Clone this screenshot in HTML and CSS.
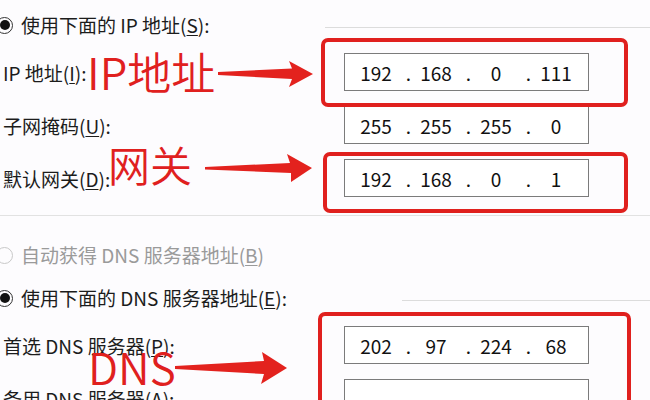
FILE: index.html
```html
<!DOCTYPE html>
<html lang="zh-CN">
<head>
    <meta charset="UTF-8">
    <title>Internet 协议版本 4 (TCP/IPv4) 属性</title>
    <link rel="stylesheet" href="styles.css">
</head>
<body>
<div class="page">
    <!-- IP address block -->
    <section class="group">
        <div class="choice">
            <span class="radio on"></span>
            <span>使用下面的 IP 地址(<u>S</u>):</span>
            <span class="rule"></span>
        </div>
        <div class="fields">
            <div class="field">
                <label>IP 地址(<u>I</u>):</label>
                <div class="ipbox"><span>192</span><i>.</i><span>168</span><i>.</i><span>0</span><i>.</i><span>111</span></div>
            </div>
            <div class="field">
                <label>子网掩码(<u>U</u>):</label>
                <div class="ipbox"><span>255</span><i>.</i><span>255</span><i>.</i><span>255</span><i>.</i><span>0</span></div>
            </div>
            <div class="field">
                <label>默认网关(<u>D</u>):</label>
                <div class="ipbox"><span>192</span><i>.</i><span>168</span><i>.</i><span>0</span><i>.</i><span>1</span></div>
            </div>
        </div>
    </section>

    <hr class="divider">

    <!-- DNS block -->
    <section class="group dns">
        <div class="choice disabled">
            <span class="radio off"></span>
            <span>自动获得 DNS 服务器地址(<u>B</u>)</span>
        </div>
        <div class="choice">
            <span class="radio on"></span>
            <span>使用下面的 DNS 服务器地址(<u>E</u>):</span>
            <span class="rule"></span>
        </div>
        <div class="fields">
            <div class="field">
                <label>首选 DNS 服务器(<u>P</u>):</label>
                <div class="ipbox"><span>202</span><i>.</i><span>97</span><i>.</i><span>224</span><i>.</i><span>68</span></div>
            </div>
            <div class="field">
                <label>备用 DNS 服务器(<u>A</u>):</label>
                <div class="ipbox"><span></span><i>.</i><span></span><i>.</i><span></span><i>.</i><span></span></div>
            </div>
        </div>
    </section>

    <!-- red annotations drawn on top -->
    <div class="mark-box box-ip"></div>
    <div class="mark-box box-gw"></div>
    <div class="mark-box box-dns"></div>

    <div class="mark-text text-ip">IP地址</div>
    <div class="mark-text text-gw">网关</div>
    <div class="mark-text text-dns">DNS</div>

    <svg class="arrows" width="650" height="400" viewBox="0 0 650 400">
        <polygon points="218,72 292,68.5 289,61 313,74 289,87 292,79 218,75"/>
        <polygon points="205,167 290,163 287,154 312,168 291,182 291,173 205,169.5"/>
        <polygon points="175,366 264,361 262,352 287,368 261,384 264,374 175,369"/>
    </svg>
</div>
</body>
</html>
```

FILE: styles.css
```css
/* Page */
body {
    margin: 0;
    background-color: #fdfcfe;
    font-family: "Noto Sans CJK SC", "Noto Sans", sans-serif;
    font-size: 19px;
    color: #1c1c1c;
}
.page {
    position: relative;
    width: 650px;
    height: 400px;
    overflow: hidden;
    padding-top: 13px;
    box-sizing: border-box;
}
u {
    text-underline-offset: 2px;
}
/* Radio rows */
.choice {
    display: flex;
    align-items: center;
    height: 24px;
    line-height: 24px;
    white-space: nowrap;
}
.choice.disabled {
    color: #9a9a9a;
}
.radio {
    flex: none;
    width: 17px;
    height: 17px;
    box-sizing: border-box;
    border: 1.5px solid #333;
    border-radius: 50%;
    margin-left: -4px;
    margin-right: 8px;
    display: flex;
    align-items: center;
    justify-content: center;
}
.radio.on::after {
    content: "";
    width: 10px;
    height: 10px;
    border-radius: 50%;
    background-color: #111;
}
.radio.off {
    border-color: #c8c8c8;
}
.rule {
    flex: 1;
    height: 1px;
    margin-left: 115px;
    margin-top: 4px;
    background-color: #dcdcdc;
}
.dns {
    padding-top: 27px;
}
.dns .choice + .choice {
    margin-top: 19px;
}
/* Address fields */
.fields {
    display: flex;
    flex-direction: column;
    gap: 15px;
    margin-top: 16px;
}
.field {
    display: flex;
    align-items: center;
    height: 38px;
}
.field label {
    width: 341px;
    padding-left: 3px;
    white-space: nowrap;
}
.ipbox {
    width: 245px;
    height: 38px;
    box-sizing: border-box;
    border: 1px solid #7b7b7b;
    background-color: #fff;
    display: flex;
    align-items: center;
    padding-left: 6px;
    font-size: 19px;
    color: #111;
}
.ipbox span {
    width: 50px;
    text-align: center;
}
.ipbox i {
    font-style: normal;
    width: 10px;
    text-align: right;
}
.divider {
    border: 0;
    height: 1px;
    margin: 18px 0 0;
    background-color: #e2e2e2;
}
/* Red annotations */
.mark-box {
    position: absolute;
    border: 4px solid #e0201e;
    border-radius: 7px;
    box-sizing: border-box;
}
.box-ip {
    left: 321px;
    top: 38px;
    width: 307px;
    height: 69px;
}
.box-gw {
    left: 323px;
    top: 152px;
    width: 305px;
    height: 61px;
}
.box-dns {
    left: 318px;
    top: 312px;
    width: 313px;
    height: 110px;
}
.mark-text {
    position: absolute;
    color: #e0201e;
    font-size: 44px;
    font-weight: 350;
    line-height: 44px;
    white-space: nowrap;
}
.text-ip {
    left: 87px;
    top: 49px;
}
.text-gw {
    left: 108px;
    top: 143px;
    font-size: 42px;
    line-height: 42px;
}
.text-dns {
    left: 88px;
    top: 344px;
}
.arrows {
    position: absolute;
    left: 0;
    top: 0;
    fill: #e3221e;
}
```
